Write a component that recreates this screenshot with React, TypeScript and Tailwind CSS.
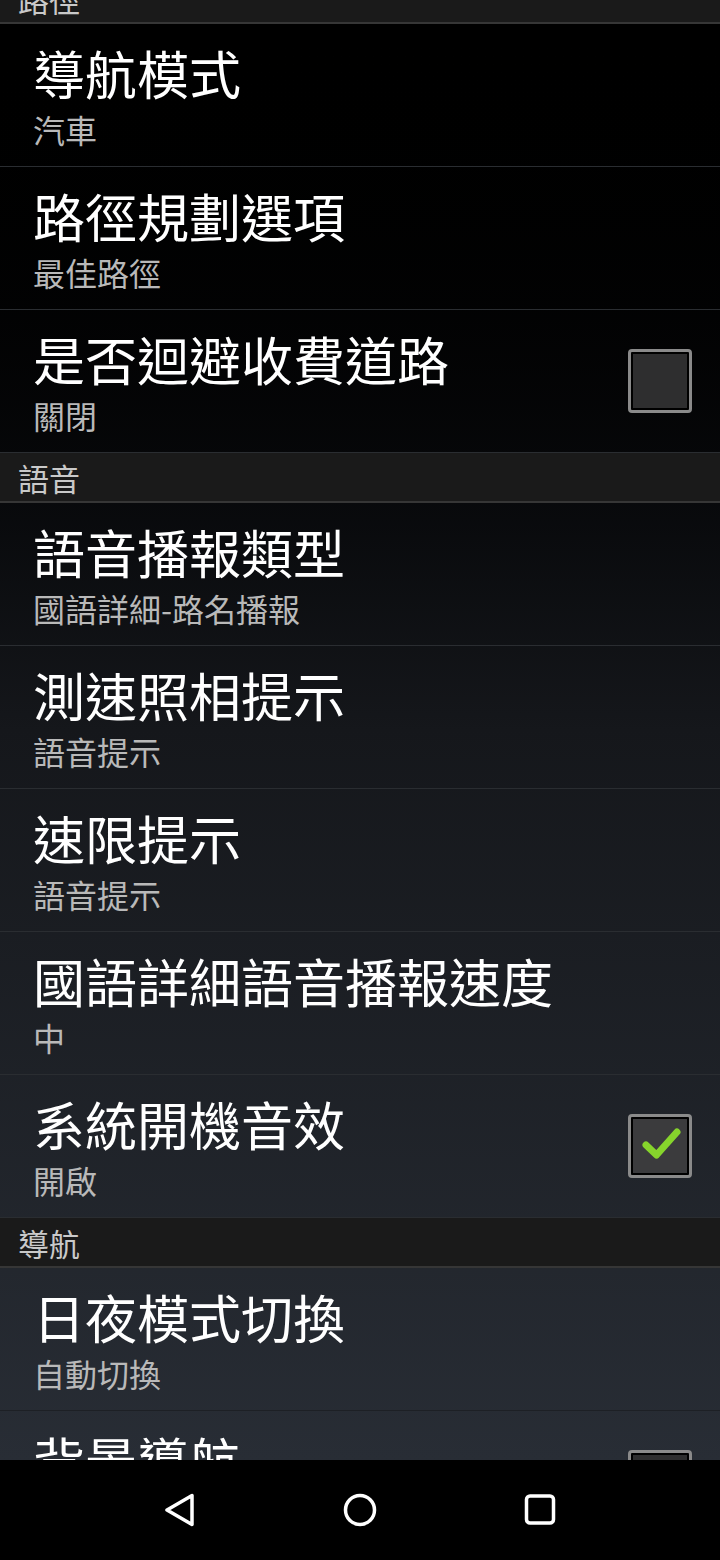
import { useState } from "react";

type Row = { title: string; sub: string; check?: boolean; line?: string };
type Section = { header: string; rows: Row[] };

const SECTIONS: Section[] = [
  {
    header: "路徑",
    rows: [
      { title: "導航模式", sub: "汽車" },
      { title: "路徑規劃選項", sub: "最佳路徑" },
      { title: "是否迴避收費道路", sub: "關閉", check: false },
    ],
  },
  {
    header: "語音",
    rows: [
      { title: "語音播報類型", sub: "國語詳細-路名播報" },
      { title: "測速照相提示", sub: "語音提示" },
      { title: "速限提示", sub: "語音提示" },
      { title: "國語詳細語音播報速度", sub: "中" },
      { title: "系統開機音效", sub: "開啟", check: true },
    ],
  },
  {
    header: "導航",
    rows: [
      { title: "日夜模式切換", sub: "自動切換", line: "dark" },
      { title: "背景導航", sub: "開啟", check: false, line: "dark" },
    ],
  },
];

const FONT = { fontFamily: '"Noto Sans CJK TC", "Noto Sans", sans-serif' };

function CheckBox({ checked }: { checked: boolean }) {
  return (
    <div className="h-[64px] w-[64px] shrink-0 rounded-[4px] border-[3px] border-[#8a8a8a] bg-black p-[2px]">
      <div className={checked ? "h-full w-full bg-[#3b3b3d]" : "h-full w-full bg-[#2e2e2f]"}>
        {checked ? (
          <svg width="54" height="54" viewBox="0 0 54 54">
            <path
              d="M13 26 L23.5 36 L44 13"
              fill="none"
              stroke="#86d42c"
              strokeWidth="7"
              strokeLinecap="round"
              strokeLinejoin="round"
            />
          </svg>
        ) : null}
      </div>
    </div>
  );
}

function PrefRow({ row }: { row: Row }) {
  const [on, setOn] = useState(!!row.check);
  const line = row.line === "dark" ? "border-[#1d2025]" : "border-[#2a2d31]";
  return (
    <div
      className={`flex h-[143px] items-center justify-between border-b pl-[33px] pr-[28px] ${line}`}
      onClick={() => setOn(!on)}
    >
      <div className="flex flex-col">
        <div className="text-[52px] leading-[60px] text-white">{row.title}</div>
        <div className="mt-[7px] text-[32px] leading-[38px] text-[#b9b9b9]">{row.sub}</div>
      </div>
      {row.check !== undefined ? <CheckBox checked={on} /> : null}
    </div>
  );
}

function NavBar() {
  return (
    <div className="flex h-[100px] shrink-0 items-center justify-center gap-[144px] bg-black">
      <svg width="36" height="36" viewBox="0 0 36 36">
        <path d="M30 3.5 L30 32.5 L5 18 Z" fill="none" stroke="#fff" strokeWidth="3.5" strokeLinejoin="round" />
      </svg>
      <svg width="36" height="36" viewBox="0 0 36 36">
        <circle cx="18" cy="18" r="14.5" fill="none" stroke="#fff" strokeWidth="3.5" />
      </svg>
      <svg width="36" height="36" viewBox="0 0 36 36">
        <rect x="4.5" y="4" width="27" height="27" rx="3.5" fill="none" stroke="#fff" strokeWidth="3.5" />
      </svg>
    </div>
  );
}

export default function App() {
  return (
    <div className="flex h-[1560px] w-[720px] flex-col bg-black" style={FONT}>
      <div className="h-[1460px] overflow-hidden bg-gradient-to-b from-[#000000] via-[#15171b] to-[#282d35]">
        <div className="-mt-[26px]">
          {SECTIONS.map((s) => (
            <div key={s.header}>
              <div className="flex h-[50px] items-center border-b-2 border-[#363636] bg-[#1a1a1a] pl-[18px] text-[31px] leading-none text-[#c9c9c9]">
                {s.header}
              </div>
              {s.rows.map((r) => (
                <PrefRow key={r.title} row={r} />
              ))}
            </div>
          ))}
        </div>
      </div>
      <NavBar />
    </div>
  );
}
